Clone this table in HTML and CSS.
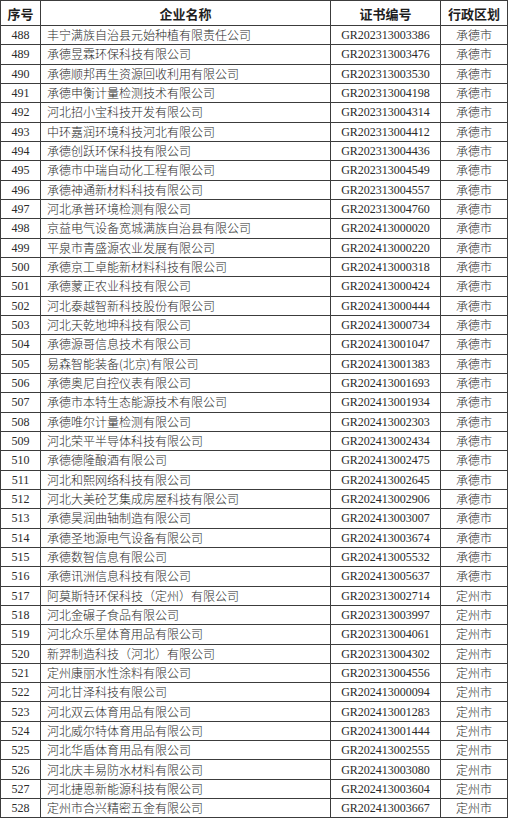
FILE: index.html
```html
<!DOCTYPE html>
<html lang="zh-CN">
<head>
<meta charset="utf-8">
<title>高新技术企业名单</title>
<link rel="stylesheet" href="styles.css">
</head>
<body>
<table class="list">
<colgroup>
<col class="c-no"><col class="c-name"><col class="c-cert"><col class="c-area">
</colgroup>
<thead>
<tr><th>序号</th><th>企业名称</th><th>证书编号</th><th>行政区划</th></tr>
</thead>
<tbody>
<tr><td class="no">488</td><td class="name">丰宁满族自治县元始种植有限责任公司</td><td class="cert">GR202313003386</td><td class="area">承德市</td></tr>
<tr><td class="no">489</td><td class="name">承德昱霖环保科技有限公司</td><td class="cert">GR202313003476</td><td class="area">承德市</td></tr>
<tr><td class="no">490</td><td class="name">承德顺邦再生资源回收利用有限公司</td><td class="cert">GR202313003530</td><td class="area">承德市</td></tr>
<tr><td class="no">491</td><td class="name">承德申衡计量检测技术有限公司</td><td class="cert">GR202313004198</td><td class="area">承德市</td></tr>
<tr><td class="no">492</td><td class="name">河北招小宝科技开发有限公司</td><td class="cert">GR202313004314</td><td class="area">承德市</td></tr>
<tr><td class="no">493</td><td class="name">中环嘉润环境科技河北有限公司</td><td class="cert">GR202313004412</td><td class="area">承德市</td></tr>
<tr><td class="no">494</td><td class="name">承德创跃环保科技有限公司</td><td class="cert">GR202313004436</td><td class="area">承德市</td></tr>
<tr><td class="no">495</td><td class="name">承德市中瑞自动化工程有限公司</td><td class="cert">GR202313004549</td><td class="area">承德市</td></tr>
<tr><td class="no">496</td><td class="name">承德神通新材料科技有限公司</td><td class="cert">GR202313004557</td><td class="area">承德市</td></tr>
<tr><td class="no">497</td><td class="name">河北承普环境检测有限公司</td><td class="cert">GR202313004760</td><td class="area">承德市</td></tr>
<tr><td class="no">498</td><td class="name">京益电气设备宽城满族自治县有限公司</td><td class="cert">GR202413000020</td><td class="area">承德市</td></tr>
<tr><td class="no">499</td><td class="name">平泉市青盛源农业发展有限公司</td><td class="cert">GR202413000220</td><td class="area">承德市</td></tr>
<tr><td class="no">500</td><td class="name">承德京工卓能新材料科技有限公司</td><td class="cert">GR202413000318</td><td class="area">承德市</td></tr>
<tr><td class="no">501</td><td class="name">承德蒙正农业科技有限公司</td><td class="cert">GR202413000424</td><td class="area">承德市</td></tr>
<tr><td class="no">502</td><td class="name">河北泰越智新科技股份有限公司</td><td class="cert">GR202413000444</td><td class="area">承德市</td></tr>
<tr><td class="no">503</td><td class="name">河北天乾地坤科技有限公司</td><td class="cert">GR202413000734</td><td class="area">承德市</td></tr>
<tr><td class="no">504</td><td class="name">承德源哥信息技术有限公司</td><td class="cert">GR202413001047</td><td class="area">承德市</td></tr>
<tr><td class="no">505</td><td class="name">易森智能装备(北京)有限公司</td><td class="cert">GR202413001383</td><td class="area">承德市</td></tr>
<tr><td class="no">506</td><td class="name">承德奥尼自控仪表有限公司</td><td class="cert">GR202413001693</td><td class="area">承德市</td></tr>
<tr><td class="no">507</td><td class="name">承德市本特生态能源技术有限公司</td><td class="cert">GR202413001934</td><td class="area">承德市</td></tr>
<tr><td class="no">508</td><td class="name">承德唯尔计量检测有限公司</td><td class="cert">GR202413002303</td><td class="area">承德市</td></tr>
<tr><td class="no">509</td><td class="name">河北荣平半导体科技有限公司</td><td class="cert">GR202413002434</td><td class="area">承德市</td></tr>
<tr><td class="no">510</td><td class="name">承德德隆酿酒有限公司</td><td class="cert">GR202413002475</td><td class="area">承德市</td></tr>
<tr><td class="no">511</td><td class="name">河北和熙网络科技有限公司</td><td class="cert">GR202413002645</td><td class="area">承德市</td></tr>
<tr><td class="no">512</td><td class="name">河北大美砼艺集成房屋科技有限公司</td><td class="cert">GR202413002906</td><td class="area">承德市</td></tr>
<tr><td class="no">513</td><td class="name">承德昊润曲轴制造有限公司</td><td class="cert">GR202413003007</td><td class="area">承德市</td></tr>
<tr><td class="no">514</td><td class="name">承德圣地源电气设备有限公司</td><td class="cert">GR202413003674</td><td class="area">承德市</td></tr>
<tr><td class="no">515</td><td class="name">承德数智信息有限公司</td><td class="cert">GR202413005532</td><td class="area">承德市</td></tr>
<tr><td class="no">516</td><td class="name">承德讯洲信息科技有限公司</td><td class="cert">GR202413005637</td><td class="area">承德市</td></tr>
<tr><td class="no">517</td><td class="name">阿莫斯特环保科技（定州）有限公司</td><td class="cert">GR202313002714</td><td class="area">定州市</td></tr>
<tr><td class="no">518</td><td class="name">河北金碾子食品有限公司</td><td class="cert">GR202313003997</td><td class="area">定州市</td></tr>
<tr><td class="no">519</td><td class="name">河北众乐星体育用品有限公司</td><td class="cert">GR202313004061</td><td class="area">定州市</td></tr>
<tr><td class="no">520</td><td class="name">新羿制造科技（河北）有限公司</td><td class="cert">GR202313004302</td><td class="area">定州市</td></tr>
<tr><td class="no">521</td><td class="name">定州康丽水性涂料有限公司</td><td class="cert">GR202313004556</td><td class="area">定州市</td></tr>
<tr><td class="no">522</td><td class="name">河北甘泽科技有限公司</td><td class="cert">GR202413000094</td><td class="area">定州市</td></tr>
<tr><td class="no">523</td><td class="name">河北双云体育用品有限公司</td><td class="cert">GR202413001283</td><td class="area">定州市</td></tr>
<tr><td class="no">524</td><td class="name">河北威尔特体育用品有限公司</td><td class="cert">GR202413001444</td><td class="area">定州市</td></tr>
<tr><td class="no">525</td><td class="name">河北华盾体育用品有限公司</td><td class="cert">GR202413002555</td><td class="area">定州市</td></tr>
<tr><td class="no">526</td><td class="name">河北庆丰易防水材料有限公司</td><td class="cert">GR202413003080</td><td class="area">定州市</td></tr>
<tr><td class="no">527</td><td class="name">河北捷恩新能源科技有限公司</td><td class="cert">GR202413003604</td><td class="area">定州市</td></tr>
<tr><td class="no">528</td><td class="name">定州市合兴精密五金有限公司</td><td class="cert">GR202413003667</td><td class="area">定州市</td></tr>
</tbody>
</table>
</body>
</html>
```
FILE: styles.css
```css
html, body {
  margin: 0;
  padding: 0;
  background: #ffffff;
}

.list {
  border-collapse: collapse;
  table-layout: fixed;
  width: 507px;
  font-family: "Liberation Serif", "Noto Sans CJK SC", serif;
  font-size: 12px;
  color: #2a2a2a;
}

.c-no { width: 40px; }
.c-name { width: 290px; }
.c-cert { width: 110px; }
.c-area { width: 67px; }

.list th,
.list td {
  border: 1px solid #3c3c3c;
  padding: 0;
  white-space: nowrap;
  overflow: hidden;
  vertical-align: middle;
}

.list thead tr {
  height: 25px;
}

.list th {
  font-family: "Noto Sans CJK SC", sans-serif;
  font-size: 13px;
  font-weight: 700;
  color: #1e1e1e;
  text-align: center;
  line-height: 1;
}

.list tbody tr {
  height: 19.34px;
}

.list td {
  line-height: 1;
}

.no,
.cert {
  text-align: center;
}

.name {
  text-align: left;
  padding-left: 6px !important;
  font-family: "Noto Sans CJK SC", sans-serif;
  font-weight: 300;
}

.area {
  text-align: center;
  font-family: "Noto Sans CJK SC", sans-serif;
  font-weight: 300;
}
```
